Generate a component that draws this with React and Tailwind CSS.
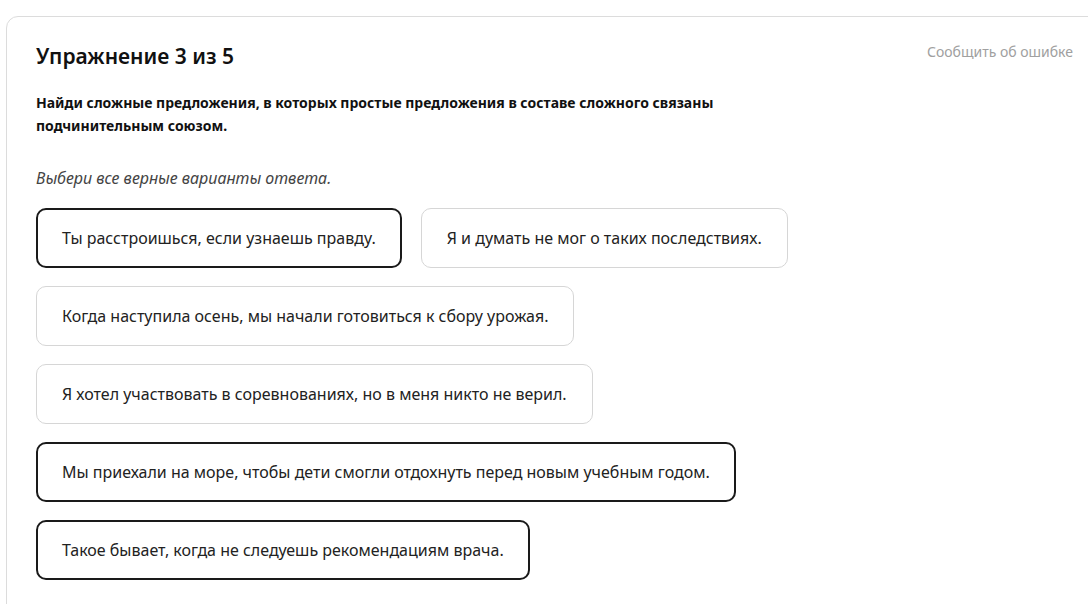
import React from "react";

const options = [
  [
    { text: "Ты расстроишься, если узнаешь правду.", selected: true },
    { text: "Я и думать не мог о таких последствиях.", selected: false },
  ],
  [{ text: "Когда наступила осень, мы начали готовиться к сбору урожая.", selected: false }],
  [{ text: "Я хотел участвовать в соревнованиях, но в меня никто не верил.", selected: false }],
  [{ text: "Мы приехали на море, чтобы дети смогли отдохнуть перед новым учебным годом.", selected: true }],
  [{ text: "Такое бывает, когда не следуешь рекомендациям врача.", selected: true }],
];

function Option({ text, selected }) {
  return (
    <button
      className={
        selected
          ? "h-[60px] rounded-[10px] border-2 border-[#1a1a1a] bg-white px-6 text-left text-[16px] text-[#222]"
          : "h-[60px] rounded-[10px] border border-[#d6d6d6] bg-white px-[25px] text-left text-[16px] text-[#222]"
      }
    >
      {text}
    </button>
  );
}

export default function App() {
  return (
    <div
      className="h-[604px] w-[1088px] overflow-hidden bg-white pl-[6px] pt-4"
      style={{ fontFamily: '"Noto Sans", "Open Sans", sans-serif' }}
    >
      <div className="h-[640px] w-[1120px] rounded-tl-[12px] border border-[#dcdcdc] pl-[29px] pr-[52px] pt-[23px]">
        <div className="flex items-start justify-between">
          <h1 className="text-[21px] font-semibold leading-[32px] text-[#111]">Упражнение 3 из 5</h1>
          <span className="mt-[1px] text-[14px] text-[#a0a0a0]">Сообщить об ошибке</span>
        </div>
        <p className="mt-[19px] w-[700px] text-[14px] font-bold leading-[23px] text-[#111]">
          Найди сложные предложения, в которых простые предложения в составе сложного связаны
          подчинительным союзом.
        </p>
        <p className="mt-[29px] text-[16px] italic leading-[24px] text-[#444]">
          Выбери все верные варианты ответа.
        </p>
        <div className="mt-[18px] flex flex-col gap-[18px]">
          {options.map((row, i) => (
            <div key={i} className="flex gap-[19px]">
              {row.map((o) => (
                <Option key={o.text} {...o} />
              ))}
            </div>
          ))}
        </div>
      </div>
    </div>
  );
}
